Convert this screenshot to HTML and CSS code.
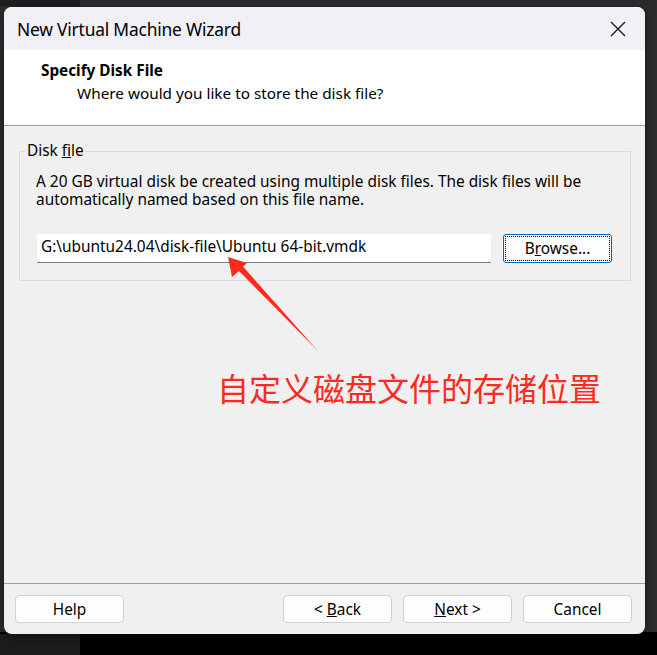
FILE: index.html
```html
<!DOCTYPE html>
<html>
<head>
<meta charset="utf-8">
<link rel="stylesheet" href="styles.css">
</head>
<body>
<div class="window">
  <div class="titlebar">
    <span class="title">New Virtual Machine Wizard</span>
    <svg class="close" width="16" height="16" viewBox="0 0 16 16"><path d="M1 1L15 15M15 1L1 15" stroke="#1a1a1a" stroke-width="1.4" fill="none"/></svg>
  </div>
  <div class="header">
    <div class="h-title">Specify Disk File</div>
    <div class="h-sub">Where would you like to store the disk file?</div>
  </div>
  <div class="content">
    <div class="group">
      <div class="legend">Disk <u>f</u>ile</div>
      <p class="desc">A 20 GB virtual disk be created using multiple disk files. The disk files will be automatically named based on this file name.</p>
      <div class="row">
        <div class="input">G:\ubuntu24.04\disk-file\Ubuntu 64-bit.vmdk</div>
        <div class="btn browse"><span class="focus"><span>B<u>r</u>owse...</span></span></div>
      </div>
    </div>
    <svg class="arrow" width="120" height="120" viewBox="0 0 120 120"><polygon points="5,8 24,14 20,17.5 95,102 16,22 9,28" fill="#ff2a1f"/></svg>
    <div class="note">自定义磁盘文件的存储位置</div>
  </div>
  <div class="footer">
    <div class="btn"><span>Help</span></div>
    <div class="spacer"></div>
    <div class="btn"><span>&lt; <u>B</u>ack</span></div>
    <div class="btn"><span><u>N</u>ext &gt;</span></div>
    <div class="btn"><span>Cancel</span></div>
  </div>
</div>
</body>
</html>
```
FILE: styles.css
```css
html, body {
  margin: 0;
  padding: 0;
}
body {
  width: 657px;
  height: 655px;
  overflow: hidden;
  background:
    linear-gradient(to bottom, transparent 0 634px, #1c1c1c 634px) 0 0 / 80px 100% no-repeat,
    linear-gradient(to bottom, #1e1e1e 0 6px, transparent 6px) 0 0 / 80px 100% no-repeat,
    linear-gradient(to bottom, #2c2c2c 0 632px, #000 632px);
  font-family: "Noto Sans", "Open Sans", sans-serif;
  color: #000;
}
.window {
  margin: 7px 0 0 4px;
  width: 641px;
  height: 627px;
  border-radius: 8px;
  overflow: hidden;
  display: flex;
  flex-direction: column;
  background: #f0f0f0;
  box-shadow: 0 2px 8px rgba(0,0,0,0.5);
}
.titlebar {
  height: 43px;
  flex: none;
  background: #f1f0f6;
  display: flex;
  align-items: center;
  justify-content: space-between;
  padding: 0 19px 0 13px;
  font-size: 17.4px;
}
.title { letter-spacing: -0.2px; }
.close { display: block; }
.header {
  height: 76px;
  flex: none;
  background: #fff;
  border-bottom: 1px solid #a0a0a0;
  padding: 10px 0 0 37px;
  box-sizing: border-box;
  font-size: 15.3px;
}
.h-title { font-weight: 700; line-height: 20px; }
.h-sub { padding-left: 36px; margin-top: 3px; line-height: 20px; }
.content {
  flex: 1;
  position: relative;
  padding: 25px 14px 0 15px;
}
.group {
  border: 1px solid #dcdcdc;
  height: 130px;
  box-sizing: border-box;
  padding: 0 16px 0 16px;
  font-size: 15.4px;
}
.legend {
  display: inline-block;
  background: #f0f0f0;
  margin: -11px 0 0 -10px;
  padding: 0 1px;
  line-height: 20px;
  vertical-align: top;
}
.desc {
  margin: 0;
  line-height: 18px;
  padding-top: 0;
}
.row {
  display: flex;
  align-items: flex-start;
  margin-top: 25px;
  margin-left: 1px;
}
.input {
  width: 454px;
  height: 29px;
  box-sizing: border-box;
  background: #fff;
  border-bottom: 1px solid #7a7a7a;
  padding: 3px 0 0 4px;
  line-height: 20px;
}
.btn {
  width: 109px;
  height: 28px;
  box-sizing: border-box;
  background: #fdfdfd;
  border: 1px solid #d0d0d0;
  border-radius: 4px;
  display: flex;
  align-items: center;
  justify-content: center;
  font-size: 15.4px;
  white-space: pre;
}
.browse {
  margin-left: 12px;
  height: 29px;
  border: 1px solid #0067c0;
  border-radius: 3px;
  padding: 1px;
}
.focus {
  flex: 1;
  align-self: stretch;
  border: 1px dotted #000;
  display: flex;
  align-items: center;
  justify-content: center;
}
.arrow {
  position: absolute;
  left: 219px;
  top: 123px;
}
.note {
  position: absolute;
  left: 213px;
  top: 241px;
  font-family: "Noto Sans CJK SC", sans-serif;
  font-size: 32px;
  line-height: 40px;
  color: #ff2a1f;
}
.footer {
  flex: none;
  height: 51px;
  box-sizing: border-box;
  border-top: 1px solid #a0a0a0;
  display: flex;
  gap: 11px;
  padding: 11px 0 0 11px;
}
.spacer { width: 137px; }
```
